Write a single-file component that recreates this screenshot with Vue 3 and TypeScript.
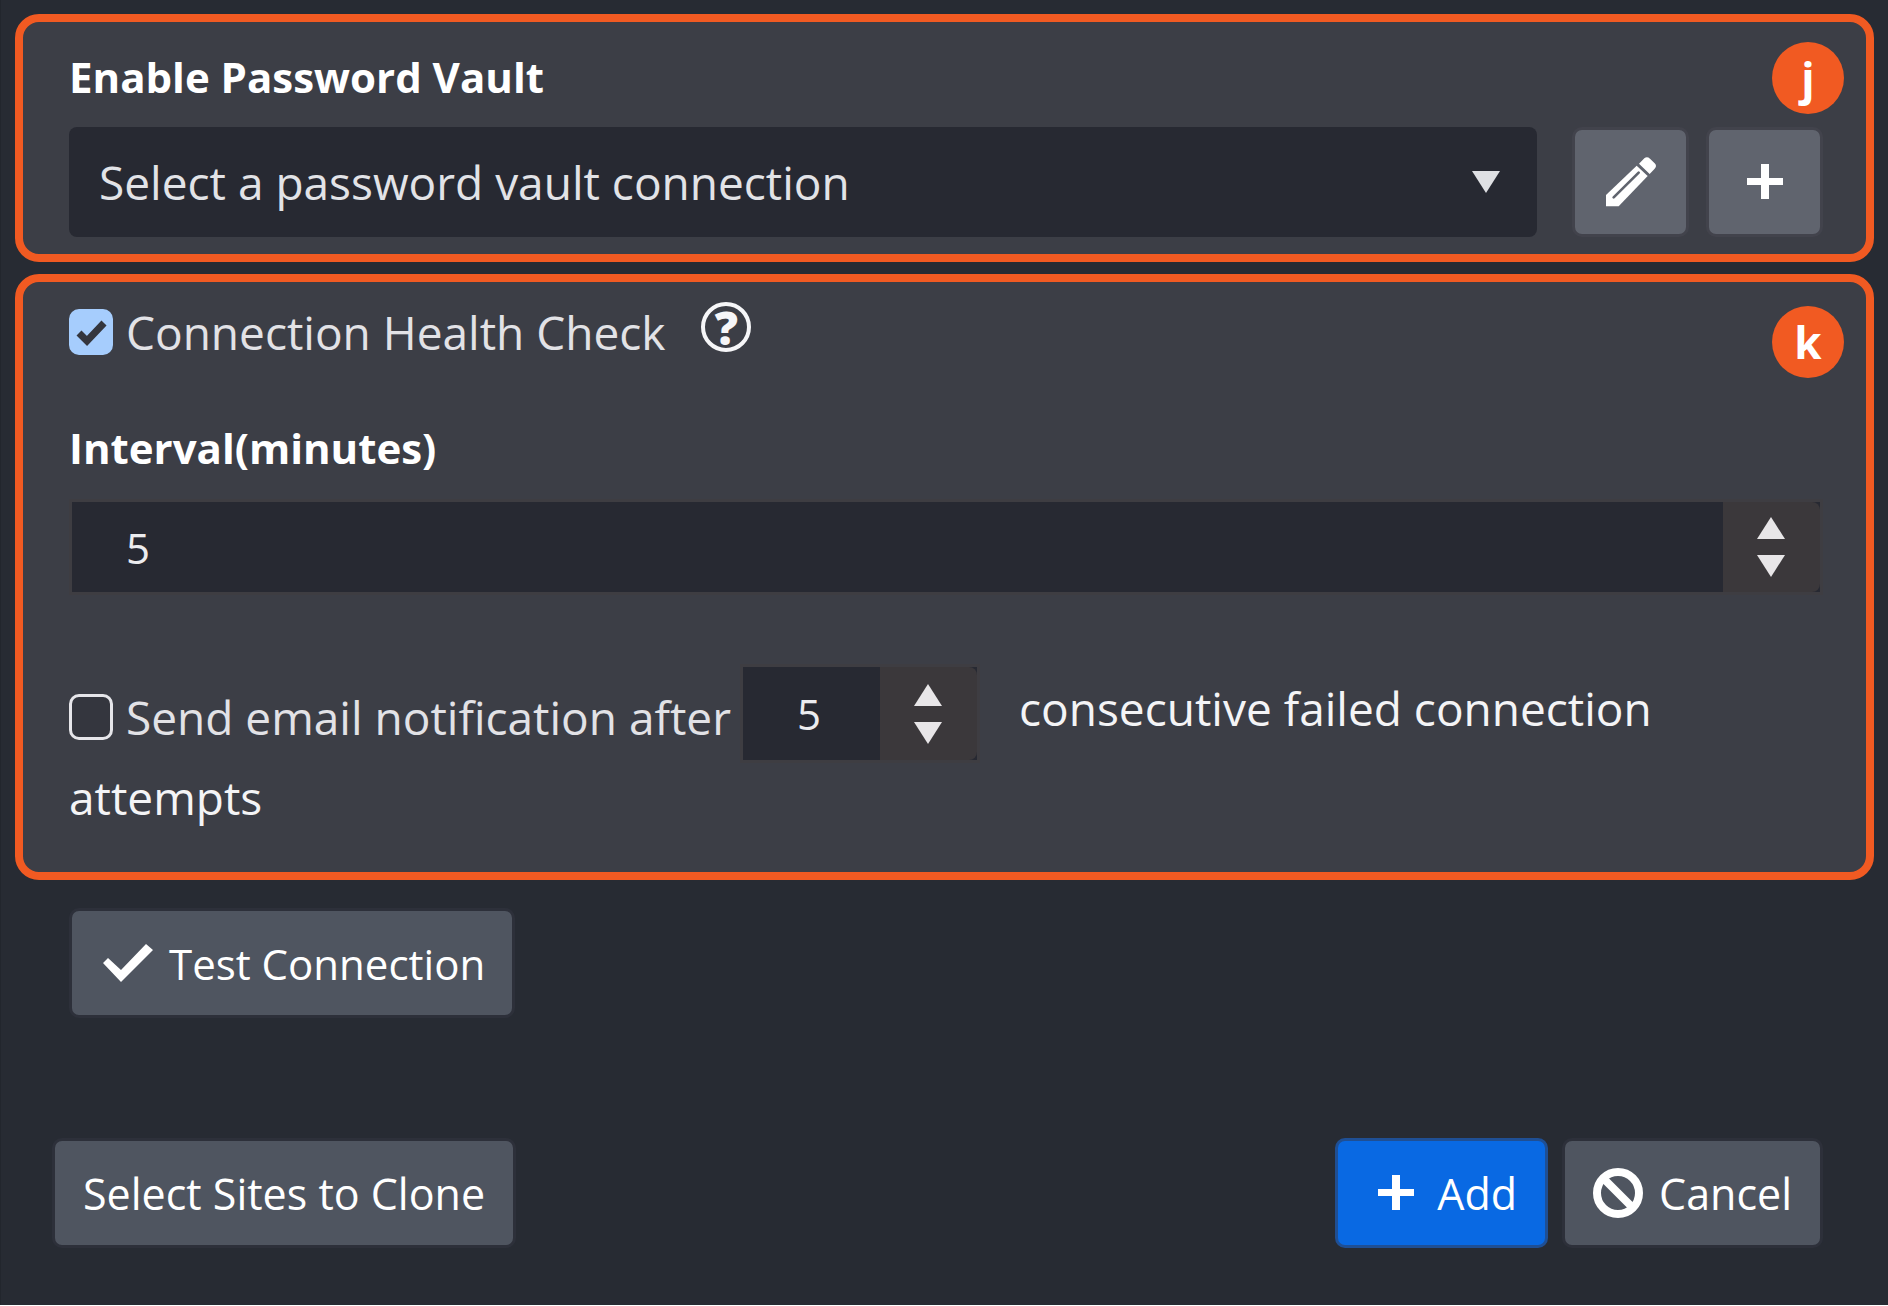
<script setup lang="ts">
import { ref } from 'vue'

const vault = ref('')
const healthCheck = ref(true)
const interval = ref(5)
const notify = ref(false)
const attempts = ref(5)
</script>

<template>
  <main class="page">
    <section class="panel panel-vault">
      <span class="badge">j</span>
      <label class="field-label" for="vault">Enable Password Vault</label>
      <div class="vault-row">
        <div class="select-wrap">
          <select id="vault" v-model="vault" class="select">
            <option value="">Select a password vault connection</option>
          </select>
          <svg class="select-arrow" viewBox="0 0 28 22" aria-hidden="true"><path d="M0 0H28L14 22Z" /></svg>
        </div>
        <button class="btn btn-icon" type="button" aria-label="Edit vault connection">
          <svg class="icon-pencil" viewBox="0 0 150 150" aria-hidden="true">
            <path d="M0 148V114L92 26L125 57L38 148Z" />
            <path d="M99 20L115 4Q123 -3 132 5L146 19Q154 27 146 35L131 51Z" />
            <path class="slot" d="M23 121L98 47" />
          </svg>
        </button>
        <button class="btn btn-icon" type="button" aria-label="Add vault connection">
          <svg class="icon-plus" viewBox="0 0 36 36" aria-hidden="true"><path d="M14 0H22V14H36V21H22V35H14V21H0V14H14Z" /></svg>
        </button>
      </div>
    </section>

    <section class="panel panel-health">
      <span class="badge">k</span>
      <div class="health-row">
        <label class="check">
          <span class="box">
            <input v-model="healthCheck" type="checkbox" />
            <svg v-if="healthCheck" viewBox="0 0 44 46" aria-hidden="true"><path d="M10 24L18 32L35 14" /></svg>
          </span>
          <span>Connection Health Check</span>
        </label>
        <button class="help" type="button" aria-label="Help">?</button>
      </div>

      <label class="field-label interval-label" for="interval">Interval(minutes)</label>
      <div class="number">
        <input id="interval" v-model="interval" type="number" />
        <div class="spinner">
          <button type="button" aria-label="Increase interval" @click="interval++">
            <svg viewBox="0 0 28 22" aria-hidden="true"><path d="M0 22H28L14 0Z" /></svg>
          </button>
          <button type="button" aria-label="Decrease interval" @click="interval--">
            <svg viewBox="0 0 28 22" aria-hidden="true"><path d="M0 0H28L14 22Z" /></svg>
          </button>
        </div>
      </div>

      <div class="notify">
        <label class="check check-inline">
          <span class="box">
            <input v-model="notify" type="checkbox" />
            <svg v-if="notify" viewBox="0 0 44 46" aria-hidden="true"><path d="M10 24L18 32L35 14" /></svg>
          </span>
          <span>Send email notification after</span>
        </label><div class="number number-inline">
          <input v-model="attempts" type="number" aria-label="Failed connection attempts" />
          <div class="spinner">
            <button type="button" aria-label="Increase attempts" @click="attempts++">
              <svg viewBox="0 0 28 22" aria-hidden="true"><path d="M0 22H28L14 0Z" /></svg>
            </button>
            <button type="button" aria-label="Decrease attempts" @click="attempts--">
              <svg viewBox="0 0 28 22" aria-hidden="true"><path d="M0 0H28L14 22Z" /></svg>
            </button>
          </div>
        </div><span>consecutive failed connection</span>{{ ' ' }}<span>attempts</span>
      </div>
    </section>

    <div class="test-row">
      <button class="btn btn-dark btn-test" type="button">
        <svg class="icon-check" viewBox="0 0 50 38" aria-hidden="true"><path d="M0 19L5 14L18 26L43 0L50 6L18 38Z" /></svg>
        Test Connection
      </button>
    </div>

    <footer class="footer">
      <button class="btn btn-dark" type="button">Select Sites to Clone</button>
      <div class="actions">
        <button class="btn btn-add" type="button">
          <svg class="icon-plus" viewBox="0 0 36 36" aria-hidden="true"><path d="M14 0H22V14H36V21H22V35H14V21H0V14H14Z" /></svg>
          Add
        </button>
        <button class="btn btn-dark btn-cancel" type="button">
          <svg class="icon-ban" viewBox="0 0 50 50" aria-hidden="true">
            <circle cx="25" cy="25" r="21" />
            <path d="M10 10L40 40" />
          </svg>
          Cancel
        </button>
      </div>
    </footer>
  </main>
</template>

<style>
body {
  background: #fff;
}
</style>

<style scoped>
.page,
.page * {
  box-sizing: border-box;
}

.page {
  min-height: calc(100vh - 1px);
  padding: 14px 14px 0 14px;
  border-left: 1px solid #22262d;
  background: #272b33;
  color: #f4f4f6;
  font-family: 'Open Sans', 'Noto Sans', sans-serif;
  font-size: 46px;
}

button,
input,
select {
  margin: 0;
  border: 0;
  font: inherit;
  color: inherit;
}

svg {
  display: block;
  fill: currentColor;
}

.panel {
  position: relative;
  border: 8px solid #f15a22;
  border-radius: 24px;
  background: #3c3e46;
}

.panel-vault {
  padding: 27px 43px 17px 46px;
}

.panel-health {
  margin-top: 12px;
  padding: 18px 43px 41px 46px;
}

.badge {
  position: absolute;
  top: 20px;
  right: 22px;
  display: flex;
  align-items: center;
  justify-content: center;
  width: 72px;
  height: 72px;
  border-radius: 50%;
  background: #f15a22;
  color: #fff;
  font-size: 44px;
  font-weight: 700;
  line-height: 60px;
}

.panel-health .badge {
  top: 24px;
}

.field-label {
  display: block;
  color: #fff;
  font-size: 42px;
  font-weight: 700;
  line-height: 56px;
}

.vault-row {
  display: flex;
  gap: 17px;
  margin-top: 22px;
}

.select-wrap {
  position: relative;
  flex: 1;
  margin-right: 18px;
}

.select {
  width: 100%;
  height: 110px;
  padding: 0 80px 0 30px;
  border-radius: 8px;
  background: #272932;
  color: #e2e3e7;
  appearance: none;
}

.select-arrow {
  position: absolute;
  top: 44px;
  right: 37px;
  width: 28px;
  height: 22px;
  color: #dfe0e4;
  pointer-events: none;
}

.btn {
  display: flex;
  align-items: center;
  height: 110px;
  padding: 0 28px;
  border: 3px solid #2d303a;
  border-radius: 10px;
  color: #fff;
  font-size: 43px;
}

.btn-icon {
  justify-content: center;
  width: 117px;
  padding: 0;
  border-color: #42434c;
  background: #60646e;
}

.btn-dark {
  background: #4f5560;
}

.btn-test {
  gap: 16px;
  padding: 0 27px 0 31px;
  font-size: 42px;
}

.btn-add {
  gap: 23px;
  padding: 0 28px 0 40px;
  border-color: #1f4f94;
  background: #0969e3;
}

.btn-cancel {
  gap: 16px;
}

.icon-pencil {
  width: 50px;
  height: 50px;
}

.icon-pencil .slot {
  fill: none;
  stroke: #60646e;
  stroke-width: 8;
  stroke-linecap: round;
}

.icon-plus {
  width: 36px;
  height: 36px;
}

.icon-check {
  width: 50px;
  height: 38px;
}

.icon-ban {
  width: 50px;
  height: 50px;
  fill: none;
  stroke: currentColor;
  stroke-width: 8;
}

.health-row {
  display: flex;
  align-items: flex-start;
  gap: 36px;
}

.check {
  display: flex;
  align-items: center;
  gap: 13px;
  color: #e2e2e6;
  line-height: 64px;
}

.check-inline {
  display: inline-flex;
  padding-top: 6px;
  vertical-align: middle;
}

.box {
  display: grid;
  width: 44px;
  height: 46px;
}

.box > * {
  grid-area: 1 / 1;
  width: 44px;
  height: 46px;
}

.box input {
  border: 3px solid #e6e6ea;
  border-radius: 10px;
  background: #34363e;
  appearance: none;
}

.box input:checked {
  border-color: #a6cdfd;
  background: #a6cdfd;
}

.box svg {
  z-index: 1;
  fill: none;
  stroke: #34363e;
  stroke-width: 7;
  pointer-events: none;
}

.help {
  display: flex;
  align-items: center;
  justify-content: center;
  width: 50px;
  height: 50px;
  margin-top: 2px;
  padding: 0;
  border: 4px solid #f6f6f8;
  border-radius: 50%;
  background: none;
  color: #f6f6f8;
  font-weight: 800;
  line-height: 42px;
}

.interval-label {
  margin-top: 56px;
}

.number {
  display: flex;
  height: 96px;
  margin-top: 23px;
  border: 3px solid #3e3d42;
  background: #272932;
}

.number input {
  flex: 1;
  min-width: 0;
  padding: 0 0 0 54px;
  background: none;
  color: #ececef;
  font-size: 42px;
  appearance: textfield;
}

.number input::-webkit-inner-spin-button {
  display: none;
}

.number-inline {
  display: inline-flex;
  width: 240px;
  height: 99px;
  margin: 0 39px 0 9px;
  vertical-align: middle;
}

.spinner {
  display: flex;
  flex-direction: column;
  width: 97px;
  padding-right: 2px;
  border-radius: 0 8px 8px 0;
  background: #3b383b;
}

.spinner button {
  display: flex;
  flex: 1;
  align-items: flex-end;
  justify-content: center;
  padding: 8px 0;
  background: none;
  color: #e8e6e8;
}

.spinner button + button {
  align-items: flex-start;
}

.spinner svg {
  width: 28px;
  height: 22px;
}

.notify {
  margin-top: 69px;
  line-height: 68px;
}

.test-row {
  display: flex;
  margin-top: 28px;
  padding-left: 54px;
}

.footer {
  display: flex;
  justify-content: space-between;
  margin-top: 120px;
  padding: 0 51px 0 37px;
}

.actions {
  display: flex;
  gap: 14px;
}
</style>
